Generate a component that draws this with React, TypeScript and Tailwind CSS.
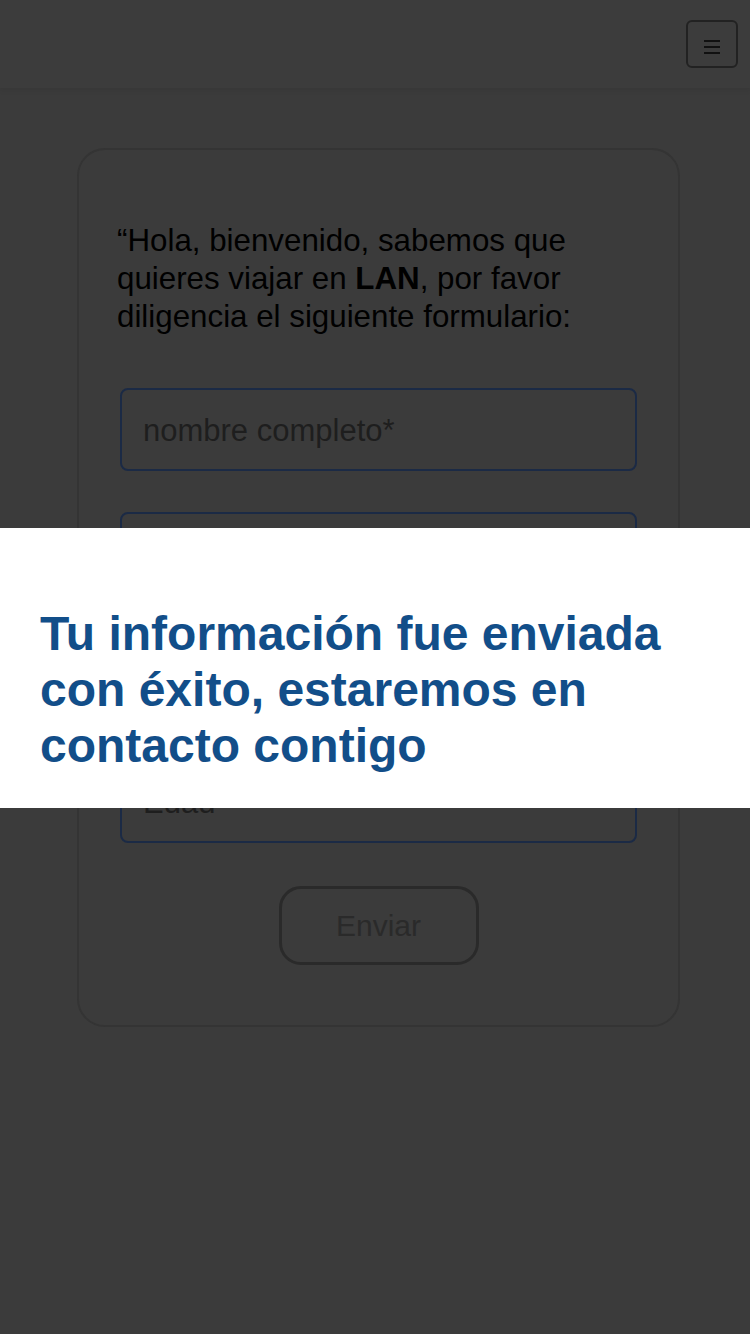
const campos = ["nombre completo*", "correo electrónico*", "celular*", "Edad"]

const App = () => {
  return (
    <div className="relative min-h-[1334px] bg-[#3b3b3b] font-['Liberation_Sans',Arial,sans-serif]">
      <header className="h-[88px] bg-[#3c3c3c] shadow-[0_2px_6px_rgba(0,0,0,0.08)] flex items-center justify-end pr-[12px]">
        <button className="w-[52px] h-[48px] border-2 border-[#222222] rounded-[6px] flex items-center justify-center">
          <span className="flex flex-col gap-[4px] mt-[6px]">
            <span className="block w-[16px] h-[2px] bg-[#111111]"></span>
            <span className="block w-[16px] h-[2px] bg-[#111111]"></span>
            <span className="block w-[16px] h-[2px] bg-[#111111]"></span>
          </span>
        </button>
      </header>

      <section className="ml-[77px] mr-[70px] mt-[60px] border-2 border-[#343434] rounded-[28px] px-[38px] pt-[72px] pb-[60px]">
        <p className="text-[31.3px] leading-[38px] text-black">
          “Hola, bienvenido, sabemos que quieres viajar en <b>LAN</b>, por favor diligencia el siguiente formulario:
        </p>
        <form className="mt-[52px] px-[3px] flex flex-col gap-[41px]">
          {campos.map((campo, index) => (
            <div
              key={index}
              className="h-[83px] border-2 border-[#1b2a45] rounded-[8px] flex items-center px-[21px] pt-[4px] text-[31px] text-[#1e1e1e]"
            >
              {campo}
            </div>
          ))}
          <div className="flex justify-center mt-[2px]">
            <button
              type="button"
              className="w-[200px] h-[79px] border-[3px] border-[#2a2a2a] rounded-[22px] text-[30px] text-[#2a2a2a]"
            >
              Enviar
            </button>
          </div>
        </form>
      </section>

      {/* mensaje de confirmacion */}
      <div className="absolute left-0 right-0 top-[528px] h-[280px] bg-white px-[40px] pt-[78px]">
        <h2 className="font-bold text-[48px] leading-[56px] text-[#124e89]">
          Tu información fue enviada con éxito, estaremos en contacto contigo
        </h2>
      </div>
    </div>
  )
}

export default App
